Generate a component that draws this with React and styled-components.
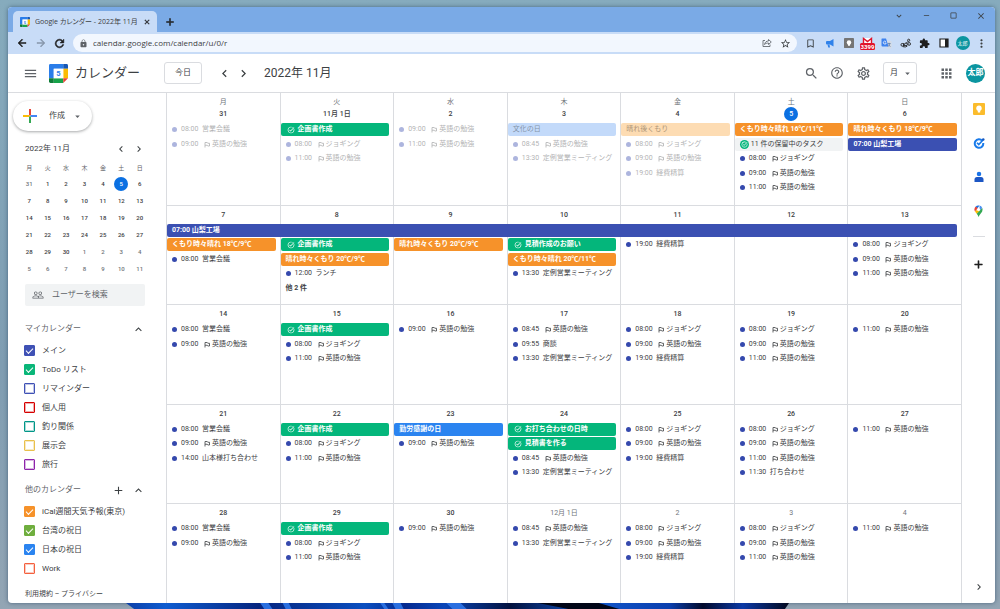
import React from 'react';
import styled, { createGlobalStyle, css } from 'styled-components';
import {
  MdMenu, MdSearch, MdHelpOutline, MdOutlineSettings, MdApps,
  MdPeopleOutline, MdChevronLeft, MdChevronRight, MdExpandLess, MdExpandMore, MdAdd,
  MdArrowDropDown, MdArrowBack, MdArrowForward, MdRefresh, MdLock, MdStarBorder,
  MdExtension, MdMoreVert, MdBookmarkBorder, MdTaskAlt, MdClose,
  MdRemove, MdCropSquare,
} from 'react-icons/md';

const GlobalStyle = createGlobalStyle`
  *, *::before, *::after { box-sizing: border-box; }
  body { margin: 0; }
  body, button, input, select {
    font-family: Roboto, "Noto Sans CJK JP", sans-serif;
    color: #3c4043;
  }
  button, input, select { padding: 0; border: 0; background: none; }
  h1, h2, ul { margin: 0; padding: 0; font-weight: 400; list-style: none; }
  svg { display: block; flex: none; }
  a { color: inherit; text-decoration: none; }
`;

/* ---------- desktop and browser window ---------- */

const Desktop = styled.div`
  min-height: 100vh;
  display: flex;
  flex-direction: column;
  padding: 7px 5px 0 8px;
  background: linear-gradient(#86abbd, #7f9db2 60%, #93a5b4);
`;

const BrowserWindow = styled.div`
  flex: 1;
  display: flex;
  flex-direction: column;
  border-radius: 4px;
  overflow: hidden;
  background: #fff;
  box-shadow: 0 0 4px rgba(30, 60, 90, 0.6);
`;

const Bloom = styled.svg`
  width: 68%;
  height: 6px;
  margin-left: 12%;
`;

const TitleBar = styled.div`
  display: flex;
  align-items: flex-end;
  height: 25px;
  padding-left: 5px;
  background: #7aaae6;
`;

const Tab = styled.div`
  display: flex;
  align-items: center;
  gap: 5px;
  width: 144px;
  height: 21px;
  padding: 0 5px 0 7px;
  border-radius: 5px 5px 0 0;
  background: #c8dcf7;
`;

const TabTitle = styled.span`
  flex: 1;
  font-family: "Open Sans", "Noto Sans CJK JP", sans-serif;
  font-size: 7px;
  line-height: 12px;
  font-feature-settings: "palt";
  white-space: nowrap;
  overflow: hidden;
`;

const IconButton = styled.button`
  display: flex;
  align-items: center;
  justify-content: center;
  flex: none;
  width: ${(p) => p.$width || 19}px;
  height: ${(p) => p.$height || 20}px;
  color: ${(p) => p.$color || '#3c4043'};
  ${(p) => p.$bold && css`
    path:not([fill='none']) { stroke: currentColor; stroke-width: 1; }
  `}
`;

const WindowControls = styled.div`
  display: flex;
  align-self: flex-start;
  margin-left: auto;
`;

const Toolbar = styled.div`
  display: flex;
  align-items: center;
  height: 22px;
  padding: 0 4px;
  background: #c8dcf7;
`;

const Omnibox = styled.form`
  flex: 1;
  display: flex;
  align-items: center;
  height: 18px;
  margin: 0 4px;
  padding: 0 2px 0 6px;
  border-radius: 9px;
  background: #f2f7fe;
`;

const AddressInput = styled.input`
  flex: 1;
  min-width: 0;
  margin-left: 5px;
  font-family: "Open Sans", sans-serif;
  font-size: 8px;
  line-height: 14px;
  color: #3c4043;
  outline: 0;
`;

const Avatar = styled.span`
  display: grid;
  place-items: center;
  width: ${(p) => p.$size}px;
  height: ${(p) => p.$size}px;
  border-radius: 50%;
  background: #0b95a0;
  color: #fff;
  font-size: ${(p) => p.$font}px;
  line-height: 10px;
  font-weight: ${(p) => p.$weight || 400};
`;

/* ---------- calendar header ---------- */

const AppHeader = styled.header`
  display: flex;
  align-items: center;
  height: 39px;
  padding-left: 14px;
  border-bottom: 1px solid #dadce0;
`;

const Brand = styled.h1`
  display: flex;
  align-items: center;
  gap: 7px;
  margin-left: 11px;
  font-size: 13px;
  line-height: 20px;
`;

const OutlineButton = styled.button`
  width: 38px;
  height: 22px;
  margin: 0 13px 0 24px;
  border: 1px solid #dadce0;
  border-radius: 3px;
  font-size: 8px;
  line-height: 20px;
`;

const PeriodTitle = styled.h2`
  margin-left: 11px;
  font-size: 12px;
  line-height: 20px;
`;

const HeaderActions = styled.div`
  display: flex;
  align-items: center;
  margin-left: auto;
`;

const ViewPicker = styled.label`
  display: flex;
  align-items: center;
  justify-content: space-between;
  width: 34px;
  height: 22px;
  margin: 0 19px 0 7px;
  padding: 0 3px 0 6px;
  border: 1px solid #dadce0;
  border-radius: 3px;
  color: #5f6368;
`;

const ViewSelect = styled.select`
  appearance: none;
  width: 12px;
  font-size: 8px;
  line-height: 16px;
  outline: 0;
`;

/* ---------- sidebar ---------- */

const Main = styled.div`
  flex: 1;
  display: flex;
`;

const Sidebar = styled.aside`
  flex: none;
  display: flex;
  flex-direction: column;
  width: 158px;
  padding: 8px 20px 3px 17px;
`;

const CreateButton = styled.button`
  display: flex;
  align-items: center;
  gap: 11px;
  width: 79px;
  height: 30px;
  margin-left: -12px;
  padding-left: 9px;
  border-radius: 15px;
  box-shadow: 0 1px 3px rgba(60, 64, 67, 0.45);
  font-size: 8px;
  line-height: 16px;
  & > svg:last-child { margin-left: -4px; color: #5f6368; }
`;

const MiniHeader = styled.div`
  display: flex;
  align-items: center;
  height: 16px;
  margin: 10px -2px 4px 0;
  font-size: 8px;
  line-height: 16px;
  & > h2 { flex: 1; font-size: 8px; }
`;

const MiniTable = styled.table`
  table-layout: fixed;
  align-self: flex-start;
  width: 129px;
  height: 117px;
  margin-left: -5px;
  border-collapse: collapse;
  text-align: center;
  font-size: 6px;
  line-height: 14px;
  th, td { padding: 0; }
  th { font-weight: 400; color: #5f6368; }
`;

const MiniDay = styled.span`
  display: block;
  width: 14px;
  height: 14px;
  margin: 0 auto;
  border-radius: 50%;
  font-weight: 500;
  color: ${(p) => (p.$muted ? '#70757a' : '#3c4043')};
  ${(p) => p.$today && css`background: #0b70e2; color: #fff;`}
`;

const PeopleSearch = styled.label`
  display: flex;
  align-items: center;
  gap: 8px;
  height: 22px;
  width: 120px;
  margin: 6px 0 13px;
  padding: 0 7px;
  border-radius: 2px;
  background: #f1f3f4;
  color: #5f6368;
`;

const PeopleInput = styled.input`
  width: 80px;
  font-size: 8px;
  line-height: 14px;
  outline: 0;
  &::placeholder { color: #5f6368; opacity: 1; }
`;

const SectionHeader = styled.div`
  display: flex;
  align-items: center;
  height: 20px;
  margin-right: -2px;
  & > h2 { flex: 1; font-size: 8px; line-height: 16px; color: #5f6368; }
`;

const CalendarList = styled.ul`
  padding: 2px 0 6px;
`;

const CalendarItem = styled.label`
  display: flex;
  align-items: center;
  gap: 7px;
  height: 19px;
  font-size: 8px;
  line-height: 16px;
  white-space: nowrap;
`;

const Checkbox = styled.input`
  appearance: none;
  display: grid;
  place-content: center;
  flex: none;
  width: 11px;
  height: 11px;
  margin: 0 0 0 -1px;
  border: 1px solid ${(p) => p.$color};
  outline: 1px solid ${(p) => p.$color}55;
  outline-offset: -2px;
  border-radius: 1px;
  &:checked { background: ${(p) => p.$color}; }
  &:checked::after {
    content: '';
    width: 7px;
    height: 4px;
    margin-bottom: 2px;
    border: solid #fff;
    border-width: 0 0 1px 1px;
    transform: rotate(-45deg);
  }
`;

const Legal = styled.footer`
  margin-top: auto;
  font-size: 7px;
  line-height: 12px;
  white-space: nowrap;
`;

/* ---------- month grid ---------- */

const MonthGrid = styled.main`
  flex: 1;
  min-width: 0;
  display: flex;
  flex-direction: column;
  border-right: 1px solid #dadce0;
`;

const Week = styled.section`
  flex: 1 0 auto;
  display: grid;
  grid-template-columns: repeat(7, minmax(0, 1fr));
  grid-template-rows: ${(p) => (p.$first ? 30 : 19)}px repeat(5, minmax(14px, 1fr)) ${(p) => (p.$first ? 9 : 8)}px;
`;

const Day = styled.div`
  grid-column: ${(p) => p.$col};
  grid-row: 1 / -1;
  padding-top: 3px;
  border-left: 1px solid #dadce0;
  border-top: ${(p) => (p.$first ? 0 : 1)}px solid #dadce0;
  text-align: center;
  font-size: 7px;
  line-height: 12px;
`;

const Weekday = styled.div`
  color: #70757a;
`;

const DateLabel = styled.div`
  font-weight: ${(p) => (p.$muted ? 400 : 500)};
  color: ${(p) => (p.$muted ? '#70757a' : '#3c4043')};
  ${(p) => p.$today && css`
    width: 14px;
    margin: -1px auto;
    border-radius: 50%;
    background: #0b70e2;
    color: #fff;
    line-height: 14px;
  `}
`;

const eventBase = css`
  grid-column: ${(p) => p.$col} / span ${(p) => p.$span || 1};
  grid-row: ${(p) => p.$row + 1};
  display: flex;
  align-items: center;
  height: 13px;
  font-size: 7px;
  line-height: 13px;
  white-space: nowrap;
  text-align: left;
  z-index: 1;
`;

const chipTones = {
  task: ['#04b67b', '#fff'],
  weather: ['#f6922a', '#fff'],
  trip: ['#3b50b2', '#fff'],
  holiday: ['#2b84f0', '#fff'],
  pending: ['#f1f3f4', '#3c4043'],
  pastHoliday: ['#c3dafa', '#8595aa'],
  pastWeather: ['#fddcb3', '#ad9577'],
};

const Chip = styled.button`
  ${eventBase}
  gap: 3px;
  margin: 0 4px 0 1px;
  padding-left: ${(p) => (p.$tone === 'task' ? 6 : 5)}px;
  border-radius: 2px;
  background: ${(p) => chipTones[p.$tone][0]};
  color: ${(p) => chipTones[p.$tone][1]};
  font-weight: ${(p) => (chipTones[p.$tone][1] === '#fff' ? 700 : 400)};
`;

const TimedEvent = styled.button`
  ${eventBase}
  padding-left: 6px;
  opacity: ${(p) => (p.$past ? 0.4 : 1)};
  &::before {
    content: '';
    width: 5px;
    height: 5px;
    margin-right: 4px;
    border-radius: 50%;
    background: #3549ad;
  }
  & > svg { margin: 0 2px; }
`;

const Time = styled.span`
  min-width: 21px;
`;

const MoreButton = styled.button`
  ${eventBase}
  padding-left: 6px;
  font-weight: 700;
`;

const PendingBadge = styled.span`
  display: grid;
  place-items: center;
  width: 9px;
  height: 9px;
  margin-right: -1px;
  border-radius: 50%;
  background: #04b67b;
  color: #fff;
`;

/* ---------- side panel ---------- */

const SidePanel = styled.nav`
  flex: none;
  display: flex;
  flex-direction: column;
  align-items: center;
  gap: 14px;
  width: 33px;
  padding: 6px 0;
  & > :last-child { margin-top: auto; }
`;

const Divider = styled.hr`
  width: 12px;
  margin: 1px 0 7px;
  border: 0;
  border-top: 1px solid #dadce0;
`;

/* ---------- drawings ---------- */

function CalendarLogo({ size }) {
  return (
    <svg width={size} height={size} viewBox="0 0 20 20" aria-hidden="true">
      <path d="M1.500 0H15v5H5v10H0V1.500Q0 0 1.500 0Z" fill="#2a7de9" />
      <path d="M15 0h3.500Q20 0 20 1.500V5h-5Z" fill="#1657b5" />
      <path d="M15 5h5v10h-5Z" fill="#fbbc04" />
      <path d="M5 15h10v5H5Z" fill="#18a34a" />
      <path d="M0 15h5v5H1.500Q0 20 0 18.500Z" fill="#0f7d38" />
      <path d="M15 15h5l-5 5Z" fill="#ea4335" />
      <path d="M5 5h10v10H5Z" fill="#fff" />
      <text x="10" y="13" textAnchor="middle" fontSize="8" fontWeight="700" fill="#2a7de9">5</text>
    </svg>
  );
}

function FlagIcon() {
  return (
    <svg width="6" height="7" viewBox="0 0 12 14" fill="none" stroke="currentColor" strokeWidth="1.600">
      <path d="M2 13V3h4.500L7.500 4.500H11V10H7.500L6.500 8.500H2" />
    </svg>
  );
}

function CreatePlus() {
  return (
    <svg width="16" height="16" viewBox="0 0 16 16" aria-hidden="true">
      <path d="M7 1h2v6l-1 1-1-1Z" fill="#ea4335" />
      <path d="M15 7v2H9L8 8l1-1Z" fill="#4285f4" />
      <path d="M1 7h6l1 1-1 1H1Z" fill="#fbbc04" />
      <path d="M7 9l1-1 1 1v6H7Z" fill="#34a853" />
    </svg>
  );
}

function ShareIcon() {
  return (
    <svg width="10" height="10" viewBox="0 0 20 20" fill="none" stroke="#5f6368" strokeWidth="1.700">
      <path d="M6 5H2v12h14v-4" />
      <path d="M5 13c1-5 4-7 8-7V3l5.500 5-5.500 5v-3c-4 0-6 1-8 3Z" />
    </svg>
  );
}

function MegaphoneIcon() {
  return (
    <svg width="10" height="10" viewBox="0 0 20 20" fill="#2f82ea">
      <path d="M17 2v15l-7-4H4q-2 0-2-2V8q0-2 2-2h6Z" />
      <path d="M5 13h4l1 6H6.500Z" />
    </svg>
  );
}

function LampIcon({ size, color, ground }) {
  return (
    <svg width={size} height={size} viewBox="0 0 12 12">
      <rect width="12" height="12" rx="1" fill={ground} />
      <circle cx="6" cy="5.300" r="2.700" fill={color} />
      <path d="M4.800 7h2.400v2.400H4.800Z" fill={color} />
    </svg>
  );
}

function GmailCounter() {
  return (
    <svg width="17" height="15" viewBox="0 0 17 15">
      <path d="M4 2h9v6H4Z" fill="#fff" />
      <path d="M4.500 7V2.500L8.500 5.500 12.500 2.500V7" fill="none" stroke="#e0142b" strokeWidth="1.400" />
      <rect x="1" y="7" width="15" height="7" rx="1.500" fill="#e0142b" />
      <text x="8.500" y="12.700" textAnchor="middle" fontSize="6" fontWeight="700" fill="#fff">3399</text>
    </svg>
  );
}

function TranslateIcon() {
  return (
    <svg width="11" height="11" viewBox="0 0 22 22">
      <path d="M9 6h10q2 0 2 2v11q0 2-2 2h-6Z" fill="#d5dbe4" />
      <path d="M13 11h6M16 9.500V11M18 11q-1 4-4 6M15 13q1 3 4 4" stroke="#4f6f9f" strokeWidth="1.300" fill="none" />
      <path d="M2 1h8l5 16H3q-2 0-2-2V2q0-1 1-1Z" fill="#3d82ee" />
      <path d="M10 7.500A3 3 0 1 0 10.500 10H7.500" stroke="#fff" strokeWidth="1.400" fill="none" />
    </svg>
  );
}

function LoopsIcon() {
  return (
    <svg width="11" height="10" viewBox="0 0 24 22" fill="none" stroke="#222" strokeWidth="2">
      <circle cx="5" cy="15" r="3" />
      <path d="M8 11v7l3-2" />
      <circle cx="13" cy="14" r="3" />
      <circle cx="19" cy="5" r="2.400" />
      <circle cx="20" cy="13" r="3" />
      <path d="M14 11l4-4M16 18q-4 3-10 1" />
    </svg>
  );
}

function SidePanelIcon() {
  return (
    <svg width="10" height="10" viewBox="0 0 10 10">
      <path d="M1 1h8v8H1Z" fill="#fff" stroke="#1f1f1f" strokeWidth="1.200" />
      <path d="M6 1h3v8H6Z" fill="#1f1f1f" />
    </svg>
  );
}

function TasksIcon() {
  return (
    <svg width="12" height="12" viewBox="0 0 24 24" fill="none">
      <path d="M18.500 7.500A8.500 8.500 0 1 0 20.500 12" stroke="#1a7bea" strokeWidth="4" />
      <path d="M8 11.500l3.500 3.500L20 6" stroke="#1a7bea" strokeWidth="3.400" />
      <circle cx="20.500" cy="5" r="2.500" fill="#1558c0" />
    </svg>
  );
}

function ContactsIcon() {
  return (
    <svg width="10" height="12" viewBox="0 0 20 24">
      <circle cx="10" cy="6" r="4.500" fill="#1a73e8" />
      <path d="M1 22v-5q0-5 5-5h8q5 0 5 5v5Z" fill="#1c56c4" />
    </svg>
  );
}

function MapsIcon() {
  return (
    <svg width="9" height="12" viewBox="0 0 18 24">
      <path d="M3 3.500A8 8 0 0 1 11 1.200L6 8Z" fill="#1a73e8" />
      <path d="M11 1.200A8 8 0 0 1 16.500 6L11 12Z" fill="#4a90f2" />
      <path d="M3 3.500A8.500 8.500 0 0 0 2 13l6-7Z" fill="#ea4335" />
      <path d="M2 13q2 3 3.500 4.500L12 11 6.500 9Z" fill="#fbbc04" />
      <path d="M16.500 6q2 6-3 11-3 3-4.500 7-1-4-3.500-6.500Z" fill="#34a853" />
      <circle cx="9" cy="9" r="3" fill="#fff" />
    </svg>
  );
}

/* ---------- data ---------- */

const weekdays = ['月', '火', '水', '木', '金', '土', '日'];

const miniWeeks = [
  [31, 1, 2, 3, 4, 5, 6],
  [7, 8, 9, 10, 11, 12, 13],
  [14, 15, 16, 17, 18, 19, 20],
  [21, 22, 23, 24, 25, 26, 27],
  [28, 29, 30, 1, 2, 3, 4],
  [5, 6, 7, 8, 9, 10, 11],
];

const myCalendars = [
  ['メイン', '#3f51b5', true],
  ['ToDo リスト', '#0ab679', true],
  ['リマインダー', '#3f51b5', false],
  ['個人用', '#d50000', false],
  ['釣り関係', '#009688', false],
  ['展示会', '#e9c04c', false],
  ['旅行', '#8e24aa', false],
];

const otherCalendars = [
  ['iCal週間天気予報(東京)', '#f6922a', true],
  ['台湾の祝日', '#6fae3e', true],
  ['日本の祝日', '#2b84f0', true],
  ['Work', '#f4603e', false],
];

const chip = (tone, text, span) => ({ tone, text, span });
const timed = (time, text, flag) => ({ time, text, flag });
const meeting = timed('08:00', '営業会議');
const jog = timed('08:00', 'ジョギング', true);
const english = (time) => timed(time, '英語の勉強', true);
const regular = timed('13:30', '定例営業ミーティング');
const expenses = timed('19:00', '経費精算');
const plan = chip('task', '企画書作成');

const weeks = [
  {
    dates: ['31', '11月 1日', '2', '3', '4', '5', '6'],
    pastDays: 5,
    days: [
      [meeting, english('09:00')],
      [plan, jog, english('11:00')],
      [english('09:00'), english('11:00')],
      [chip('pastHoliday', '文化の日'), english('08:45'), regular],
      [chip('pastWeather', '晴れ後くもり'), jog, english('09:00'), expenses],
      [chip('weather', 'くもり時々晴れ 16℃/11℃'), chip('pending', '11 件の保留中のタスク'), jog, english('09:00'), english('11:00')],
      [chip('weather', '晴れ時々くもり 18℃/9℃'), chip('trip', '07:00 山梨工場')],
    ],
  },
  {
    dates: ['7', '8', '9', '10', '11', '12', '13'],
    days: [
      [chip('trip', '07:00 山梨工場', 7), chip('weather', 'くもり時々晴れ 18℃/9℃'), meeting],
      [null, plan, chip('weather', '晴れ時々くもり 20℃/9℃'), timed('12:00', 'ランチ'), { more: '他 2 件' }],
      [null, chip('weather', '晴れ時々くもり 20℃/9℃')],
      [null, chip('task', '見積作成のお願い'), chip('weather', 'くもり時々晴れ 20℃/11℃'), regular],
      [null, expenses],
      [],
      [null, jog, english('09:00'), english('11:00')],
    ],
  },
  {
    dates: ['14', '15', '16', '17', '18', '19', '20'],
    days: [
      [meeting, english('09:00')],
      [plan, jog, english('11:00')],
      [english('09:00')],
      [english('08:45'), timed('09:55', '商談'), regular],
      [jog, english('09:00'), expenses],
      [jog, english('09:00'), english('11:00')],
      [english('11:00')],
    ],
  },
  {
    dates: ['21', '22', '23', '24', '25', '26', '27'],
    days: [
      [meeting, english('09:00'), timed('14:00', '山本様打ち合わせ')],
      [plan, jog, english('11:00')],
      [chip('holiday', '勤労感謝の日'), english('09:00')],
      [chip('task', 'お打ち合わせの日時'), chip('task', '見積書を作る'), english('08:45'), regular],
      [jog, english('09:00'), expenses],
      [jog, english('09:00'), english('11:00'), timed('11:30', '打ち合わせ')],
      [english('11:00')],
    ],
  },
  {
    dates: ['28', '29', '30', '12月 1日', '2', '3', '4'],
    nextMonthFrom: 3,
    days: [
      [meeting, english('09:00')],
      [plan, jog, english('11:00')],
      [english('09:00')],
      [english('08:45'), regular],
      [jog, english('09:00'), expenses],
      [jog, english('09:00'), english('11:00')],
      [english('11:00')],
    ],
  },
];

/* ---------- composition ---------- */

function EventItem({ event, col, row, past }) {
  const place = { $col: col, $row: row, $span: event.span };
  if (event.more) return <MoreButton {...place}>{event.more}</MoreButton>;
  if (event.tone) {
    return (
      <Chip {...place} $tone={event.tone}>
        {event.tone === 'task' && <MdTaskAlt size={8} />}
        {event.tone === 'pending' && <PendingBadge><MdTaskAlt size={7} /></PendingBadge>}
        <span>{event.text}</span>
      </Chip>
    );
  }
  return (
    <TimedEvent {...place} $past={past}>
      <Time>{event.time}</Time>
      {event.flag && <FlagIcon />}
      <span>{event.text}</span>
    </TimedEvent>
  );
}

function WeekRow({ week, index }) {
  const first = index === 0;
  return (
    <Week $first={first}>
      {week.dates.map((date, i) => (
        <Day key={date} $col={i + 1} $first={first}>
          {first && <Weekday>{weekdays[i]}</Weekday>}
          <DateLabel $today={first && i === 5} $muted={week.nextMonthFrom !== undefined && i >= week.nextMonthFrom}>
            {date}
          </DateLabel>
        </Day>
      ))}
      {week.days.map((events, i) =>
        events.map((event, j) => event && (
          <EventItem key={`${i}-${j}`} event={event} col={i + 1} row={j + 1} past={i < (week.pastDays || 0)} />
        ))
      )}
    </Week>
  );
}

function CalendarGroup({ title, items, canAdd }) {
  return (
    <>
      <SectionHeader>
        <h2>{title}</h2>
        {canAdd && <IconButton aria-label="追加" $width={20}><MdAdd size={13} /></IconButton>}
        <IconButton aria-label="折りたたむ" $width={20}><MdExpandLess size={13} /></IconButton>
      </SectionHeader>
      <CalendarList>
        {items.map(([name, color, checked]) => (
          <li key={name}>
            <CalendarItem>
              <Checkbox type="checkbox" $color={color} defaultChecked={checked} />
              {name}
            </CalendarItem>
          </li>
        ))}
      </CalendarList>
    </>
  );
}

function MiniCalendar() {
  return (
    <>
      <MiniHeader>
        <h2>2022年 11月</h2>
        <IconButton aria-label="前の月" $width={18} $height={16}><MdChevronLeft size={12} /></IconButton>
        <IconButton aria-label="次の月" $width={18} $height={16}><MdChevronRight size={12} /></IconButton>
      </MiniHeader>
      <MiniTable>
        <thead>
          <tr>{weekdays.map((d) => <th key={d} scope="col">{d}</th>)}</tr>
        </thead>
        <tbody>
          {miniWeeks.map((days, r) => (
            <tr key={r}>
              {days.map((d, c) => (
                <td key={c}>
                  <MiniDay
                    $today={r === 0 && c === 5}
                    $muted={(r === 0 && c === 0) || (r === 4 && c > 2) || r === 5}
                  >
                    {d}
                  </MiniDay>
                </td>
              ))}
            </tr>
          ))}
        </tbody>
      </MiniTable>
    </>
  );
}

export default function App() {
  return (
    <>
      <GlobalStyle />
      <Desktop lang="ja">
        <BrowserWindow>
          <TitleBar>
            <Tab>
              <CalendarLogo size={10} />
              <TabTitle>Google カレンダー - 2022年 11月</TabTitle>
              <IconButton aria-label="タブを閉じる" $width={10} $color="#1f1f1f" $bold><MdClose size={8} /></IconButton>
            </Tab>
            <IconButton aria-label="新しいタブ" $width={25} $color="#1f1f1f" $bold><MdAdd size={12} /></IconButton>
            <WindowControls>
              <IconButton aria-label="タブを検索" $width={28} $height={17}><MdExpandMore size={10} /></IconButton>
              <IconButton aria-label="最小化" $width={27} $height={17}><MdRemove size={9} /></IconButton>
              <IconButton aria-label="最大化" $width={27} $height={17}><MdCropSquare size={9} /></IconButton>
              <IconButton aria-label="閉じる" $width={28} $height={17}><MdClose size={10} /></IconButton>
            </WindowControls>
          </TitleBar>
          <Toolbar>
            <IconButton aria-label="戻る" $color="#1f1f1f" $bold><MdArrowBack size={12} /></IconButton>
            <IconButton aria-label="進む" $color="#8796ab" $bold><MdArrowForward size={12} /></IconButton>
            <IconButton aria-label="再読み込み" $color="#1f1f1f" $bold><MdRefresh size={13} /></IconButton>
            <Omnibox>
              <MdLock size={9} color="#5f6368" />
              <AddressInput aria-label="アドレス" defaultValue="calendar.google.com/calendar/u/0/r" />
              <IconButton type="button" aria-label="共有"><ShareIcon /></IconButton>
              <IconButton type="button" aria-label="ブックマーク"><MdStarBorder size={11} /></IconButton>
            </Omnibox>
            <IconButton aria-label="しおり"><MdBookmarkBorder size={11} /></IconButton>
            <IconButton aria-label="お知らせ"><MegaphoneIcon /></IconButton>
            <IconButton aria-label="Keep"><LampIcon size={10} ground="#757575" color="#fff" /></IconButton>
            <IconButton aria-label="Gmail"><GmailCounter /></IconButton>
            <IconButton aria-label="翻訳"><TranslateIcon /></IconButton>
            <IconButton aria-label="リンク"><LoopsIcon /></IconButton>
            <IconButton aria-label="拡張機能" $color="#1f1f1f"><MdExtension size={11} /></IconButton>
            <IconButton aria-label="サイドパネル"><SidePanelIcon /></IconButton>
            <IconButton aria-label="プロフィール"><Avatar $size={14} $font={5}>太郎</Avatar></IconButton>
            <IconButton aria-label="メニュー"><MdMoreVert size={13} /></IconButton>
          </Toolbar>

          <AppHeader>
            <IconButton aria-label="メインメニュー" $width={16} $color="#5f6368"><MdMenu size={15} /></IconButton>
            <Brand><CalendarLogo size={19} />カレンダー</Brand>
            <OutlineButton>今日</OutlineButton>
            <IconButton aria-label="前の月"><MdChevronLeft size={15} /></IconButton>
            <IconButton aria-label="次の月"><MdChevronRight size={15} /></IconButton>
            <PeriodTitle>2022年 11月</PeriodTitle>
            <HeaderActions>
              <IconButton aria-label="検索" $width={26} $color="#5f6368"><MdSearch size={15} /></IconButton>
              <IconButton aria-label="ヘルプ" $width={26} $color="#5f6368"><MdHelpOutline size={14} /></IconButton>
              <IconButton aria-label="設定" $width={26} $color="#5f6368"><MdOutlineSettings size={15} /></IconButton>
              <ViewPicker>
                <ViewSelect aria-label="表示"><option>月</option></ViewSelect>
                <MdArrowDropDown size={11} />
              </ViewPicker>
              <IconButton aria-label="アプリ" $width={20} $color="#5f6368"><MdApps size={15} /></IconButton>
              <IconButton aria-label="アカウント" $width={39}><Avatar $size={19} $font={8} $weight={700}>太郎</Avatar></IconButton>
            </HeaderActions>
          </AppHeader>

          <Main>
            <Sidebar>
              <CreateButton><CreatePlus />作成<MdArrowDropDown size={11} /></CreateButton>
              <MiniCalendar />
              <PeopleSearch>
                <MdPeopleOutline size={12} />
                <PeopleInput type="search" aria-label="ユーザーを検索" placeholder="ユーザーを検索" />
              </PeopleSearch>
              <CalendarGroup title="マイカレンダー" items={myCalendars} />
              <CalendarGroup title="他のカレンダー" items={otherCalendars} canAdd />
              <Legal><a href="#terms">利用規約</a> – <a href="#privacy">プライバシー</a></Legal>
            </Sidebar>

            <MonthGrid>
              {weeks.map((week, i) => <WeekRow key={i} week={week} index={i} />)}
            </MonthGrid>

            <SidePanel>
              <IconButton aria-label="Keep"><LampIcon size={12} ground="#fbbc2c" color="#fff" /></IconButton>
              <IconButton aria-label="ToDo リスト"><TasksIcon /></IconButton>
              <IconButton aria-label="連絡先"><ContactsIcon /></IconButton>
              <IconButton aria-label="マップ"><MapsIcon /></IconButton>
              <Divider />
              <IconButton aria-label="アドオンを取得" $height={12} $color="#1f1f1f" $bold><MdAdd size={13} /></IconButton>
              <IconButton aria-label="サイドパネルを隠す"><MdChevronRight size={12} /></IconButton>
            </SidePanel>
          </Main>
        </BrowserWindow>
        <Bloom viewBox="0 0 660 6" preserveAspectRatio="none" aria-hidden="true">
          <defs>
            <linearGradient id="bloom">
              <stop offset="0" stopColor="#0d3fa8" />
              <stop offset="0.060" stopColor="#0f5cd0" />
              <stop offset="0.200" stopColor="#06257f" />
              <stop offset="0.360" stopColor="#0b4fc0" />
              <stop offset="0.420" stopColor="#052a90" />
              <stop offset="0.480" stopColor="#0a46b8" />
              <stop offset="0.580" stopColor="#03123f" />
              <stop offset="0.700" stopColor="#1258cc" />
              <stop offset="0.820" stopColor="#0b3fae" />
              <stop offset="0.870" stopColor="#020a2c" />
              <stop offset="0.930" stopColor="#0c3aa6" />
              <stop offset="1" stopColor="#03091f" />
            </linearGradient>
          </defs>
          <path d="M0 0H652L648 6H8Z" fill="url(#bloom)" />
          <path d="M132 0h8l4 6h-8ZM154 0h6l3 6h-6ZM250 0h4l4 6h-4ZM262 0h8l3 6h-8ZM315 0h14l6 6h-14Z" fill="#2a6fe0" />
          <path d="M405 0h60l20 6h-50Z" fill="#010617" />
        </Bloom>
      </Desktop>
    </>
  );
}
